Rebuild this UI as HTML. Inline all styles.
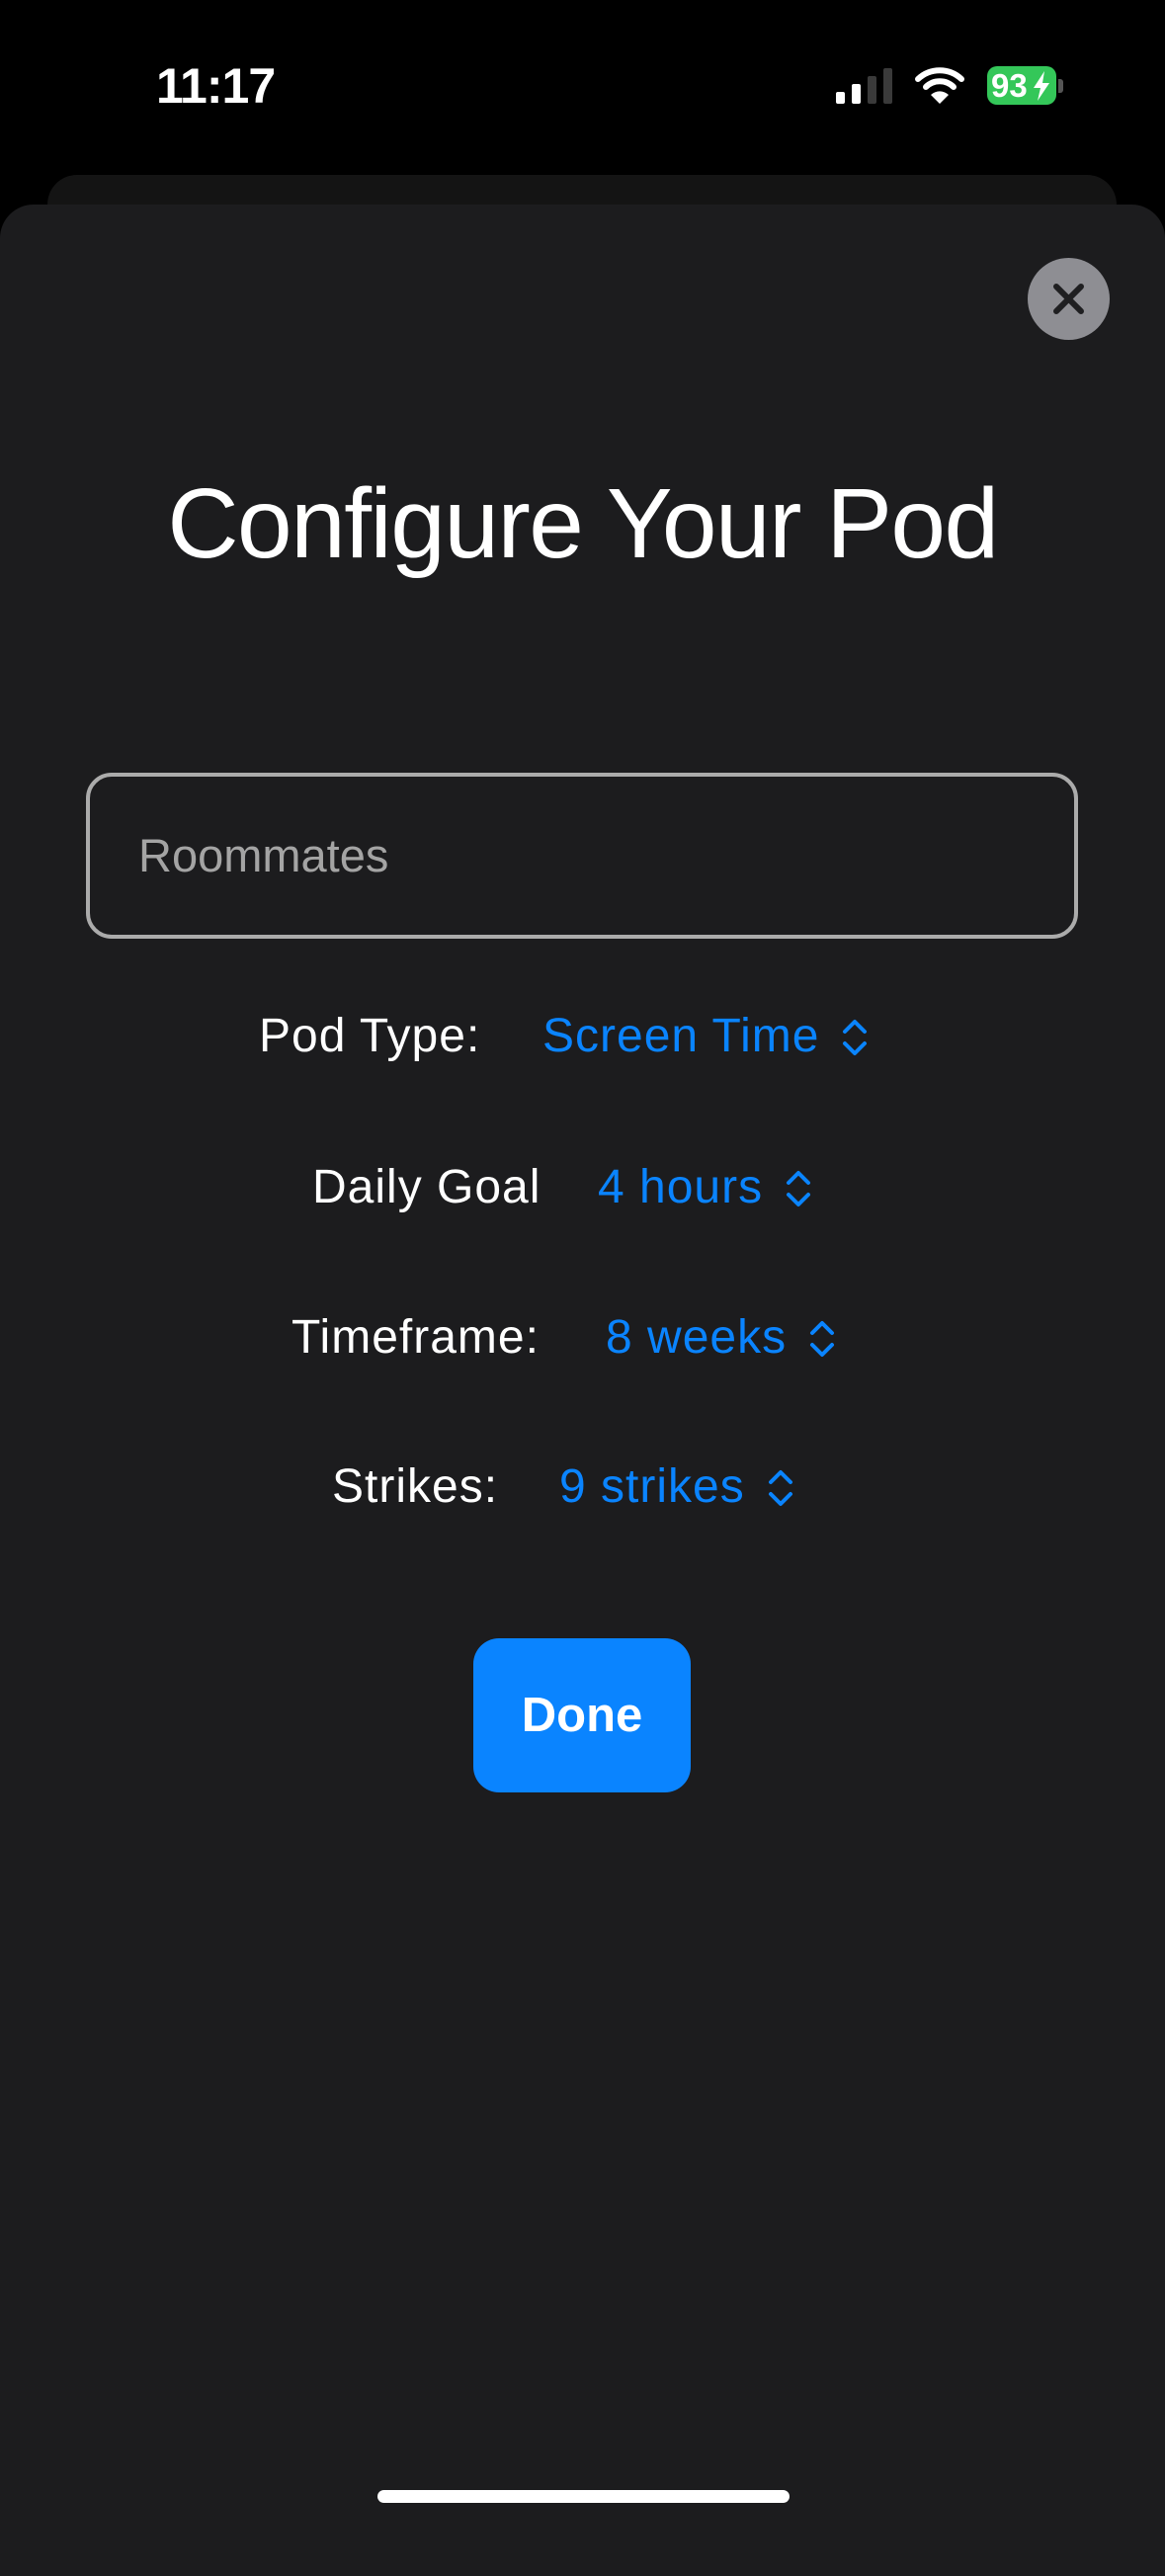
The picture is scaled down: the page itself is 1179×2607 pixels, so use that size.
<!DOCTYPE html>
<html><head><meta charset="utf-8">
<style>
html,body{margin:0;padding:0;background:#000;}
body{width:1179px;height:2556px;position:relative;overflow:hidden;font-family:"Liberation Sans",sans-serif;}
.abs{position:absolute;}
.time{left:158px;top:62px;font-size:50px;font-weight:bold;color:#fff;letter-spacing:-1px;line-height:50px;}
.back{left:48px;top:177px;width:1082px;height:100px;background:#141414;border-radius:30px 30px 0 0;}
.sheet{left:0;top:207px;width:1179px;height:2400px;background:#1c1c1e;border-radius:34px 34px 0 0;}
.close{left:1040px;top:261px;width:83px;height:83px;border-radius:50%;background:#8e8e93;}
.title{left:0;width:1179px;top:475px;text-align:center;font-size:100px;color:#fff;line-height:110px;letter-spacing:-1.5px;}
.field{left:87px;top:782px;border:4px solid #ababab;border-radius:26px;box-sizing:content-box;width:996px;height:160px;}
.ph{left:140px;top:836px;font-size:47px;color:#a4a4a4;line-height:60px;}
.lbl{font-size:48px;color:#fff;line-height:60px;letter-spacing:1px;}
.val{font-size:48px;color:#0a84ff;line-height:60px;letter-spacing:1px;}
.done{left:479px;top:1658px;width:220px;height:156px;background:#0a84ff;border-radius:26px;color:#fff;font-weight:bold;font-size:49px;text-align:center;line-height:156px;}
.home{left:382px;top:2520px;width:417px;height:13px;border-radius:7px;background:#fff;}
</style></head><body>
<div class="abs time">11:17</div>
<div class="abs" style="left:846px;top:93px;width:9px;height:12px;background:#fff;border-radius:2px"></div>
<div class="abs" style="left:862px;top:85px;width:9px;height:20px;background:#fff;border-radius:2px"></div>
<div class="abs" style="left:878px;top:77px;width:9px;height:28px;background:#3a3a3a;border-radius:2px"></div>
<div class="abs" style="left:894px;top:69px;width:9px;height:36px;background:#3a3a3a;border-radius:2px"></div>
<svg class="abs" style="left:925px;top:66px" width="52" height="40" viewBox="0 0 52 40">
<path d="M4 14 A32 32 0 0 1 48 14" stroke="#fff" stroke-width="6" fill="none" stroke-linecap="round"/>
<path d="M12 22 A20 20 0 0 1 40 22" stroke="#fff" stroke-width="6" fill="none" stroke-linecap="round"/>
<path d="M17 30 L26 39 L35 30 A13 13 0 0 0 17 30Z" fill="#fff"/>
</svg>
<div class="abs" style="left:999px;top:67px;width:70px;height:39px;background:#34c759;border-radius:10px;"></div>
<div class="abs" style="left:1071px;top:80px;width:5px;height:14px;background:#555;border-radius:0 3px 3px 0"></div>
<div class="abs" style="left:1003px;top:69px;font-size:33px;font-weight:bold;color:#fff;line-height:36px">93</div>
<svg class="abs" style="left:1043px;top:71px" width="22" height="32" viewBox="0 0 22 32"><path d="M14 1 L3 18 L10 18 L7 31 L19 13 L12 13 Z" fill="#fff"/></svg>
<div class="abs back"></div>
<div class="abs sheet"></div>
<div class="abs close"></div>
<svg class="abs" style="left:1040px;top:261px" width="83" height="83" viewBox="0 0 83 83"><path d="M29 29 L54 54 M54 29 L29 54" stroke="#1f1f21" stroke-width="6" stroke-linecap="round"/></svg>
<div class="abs title">Configure Your Pod</div>
<div class="abs field"></div>
<div class="abs ph">Roommates</div>

<div class="abs lbl" style="left:262px;top:1019px">Pod Type:</div>
<div class="abs val" style="left:549px;top:1019px">Screen Time</div>
<div class="abs lbl" style="left:316px;top:1172px">Daily Goal</div>
<div class="abs val" style="left:605px;top:1172px">4 hours</div>
<div class="abs lbl" style="left:295px;top:1324px">Timeframe:</div>
<div class="abs val" style="left:613px;top:1324px">8 weeks</div>
<div class="abs lbl" style="left:336px;top:1475px">Strikes:</div>
<div class="abs val" style="left:566px;top:1475px">9 strikes</div>

<svg class="abs" style="left:850px;top:1030px" width="30" height="40" viewBox="0 0 30 40"><path d="M5 14 L15 4 L25 14 M5 26 L15 36 L25 26" stroke="#0a84ff" stroke-width="4" fill="none" stroke-linecap="round" stroke-linejoin="round"/></svg>
<svg class="abs" style="left:793px;top:1183px" width="30" height="40" viewBox="0 0 30 40"><path d="M5 14 L15 4 L25 14 M5 26 L15 36 L25 26" stroke="#0a84ff" stroke-width="4" fill="none" stroke-linecap="round" stroke-linejoin="round"/></svg>
<svg class="abs" style="left:817px;top:1335px" width="30" height="40" viewBox="0 0 30 40"><path d="M5 14 L15 4 L25 14 M5 26 L15 36 L25 26" stroke="#0a84ff" stroke-width="4" fill="none" stroke-linecap="round" stroke-linejoin="round"/></svg>
<svg class="abs" style="left:775px;top:1486px" width="30" height="40" viewBox="0 0 30 40"><path d="M5 14 L15 4 L25 14 M5 26 L15 36 L25 26" stroke="#0a84ff" stroke-width="4" fill="none" stroke-linecap="round" stroke-linejoin="round"/></svg>

<div class="abs done">Done</div>
<div class="abs home"></div>
</body></html>
